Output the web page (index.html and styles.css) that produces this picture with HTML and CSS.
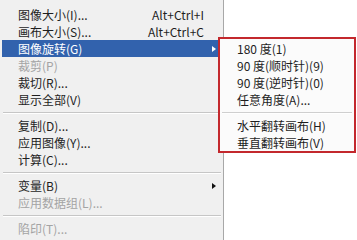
FILE: index.html
```html
<!DOCTYPE html>
<html lang="zh-CN">
<head>
  <meta charset="UTF-8">
  <title>图像菜单</title>
  <link rel="stylesheet" href="styles.css">
</head>
<body>

<div class="menu">
  <div class="item"><span>图像大小(I)...</span><span class="key">Alt+Ctrl+I</span></div>
  <div class="item"><span>画布大小(S)...</span><span class="key">Alt+Ctrl+C</span></div>
  <div class="item active"><span>图像旋转(G)</span><span class="arrow"></span></div>
  <div class="item off"><span>裁剪(P)</span></div>
  <div class="item"><span>裁切(R)...</span></div>
  <div class="item"><span>显示全部(V)</span></div>
  <div class="sep"></div>
  <div class="item"><span>复制(D)...</span></div>
  <div class="item"><span>应用图像(Y)...</span></div>
  <div class="item"><span>计算(C)...</span></div>
  <div class="sep"></div>
  <div class="item"><span>变量(B)</span><span class="arrow"></span></div>
  <div class="item off"><span>应用数据组(L)...</span></div>
  <div class="sep"></div>
  <div class="item off"><span>陷印(T)...</span></div>
</div>

<!-- 子菜单：盖在主菜单上 -->
<div class="submenu">
  <div class="item">180 度(1)</div>
  <div class="item">90 度(顺时针)(9)</div>
  <div class="item">90 度(逆时针)(0)</div>
  <div class="item">任意角度(A)...</div>
  <div class="sep"></div>
  <div class="item">水平翻转画布(H)</div>
  <div class="item">垂直翻转画布(V)</div>
</div>

</body>
</html>
```

FILE: styles.css
```css
body {
  margin: 0;
  background: #fff;
  font-family: "Noto Sans CJK SC", "Noto Sans", sans-serif;
  font-size: 12px;
  color: #1e1e1e;
  height: 240px;
  overflow: hidden;
}

.menu {
  width: 221px;
  height: 240px;
  padding: 6px 0 0 2px;
  background: #f0f0f0;
  border-right: 1px solid #a8a8a8;
}

.item {
  display: flex;
  align-items: center;
  height: 17px;
  line-height: 17px;
  padding: 0 19px 0 16px;
  white-space: nowrap;
}

.item .key {
  margin-left: auto;
}

.item.active {
  background: #3262ad;
  color: #fff;
}

.item.off {
  color: #a4a4a4;
}

.arrow {
  margin-left: auto;
  margin-right: -12px;
  width: 0;
  height: 0;
  border-top: 3.5px solid transparent;
  border-bottom: 3.5px solid transparent;
  border-left: 4px solid #111;
}

.item.active .arrow {
  border-left-color: #fff;
}

.sep {
  height: 0;
  margin: 4px 2px 3px 1px;
  border-top: 1px solid #c6c6c6;
  border-bottom: 1px solid #fff;
}

.submenu {
  position: absolute;
  left: 218px;
  top: 37px;
  width: 134px;
  padding-top: 1px;
  background: #fbfbfb;
  border: 2px solid #c3282d;
}

.submenu .item {
  padding-left: 17px;
}

.submenu .sep {
  margin: 4px 2px 3px 2px;
  border-top-color: #cfcfcf;
}
```
